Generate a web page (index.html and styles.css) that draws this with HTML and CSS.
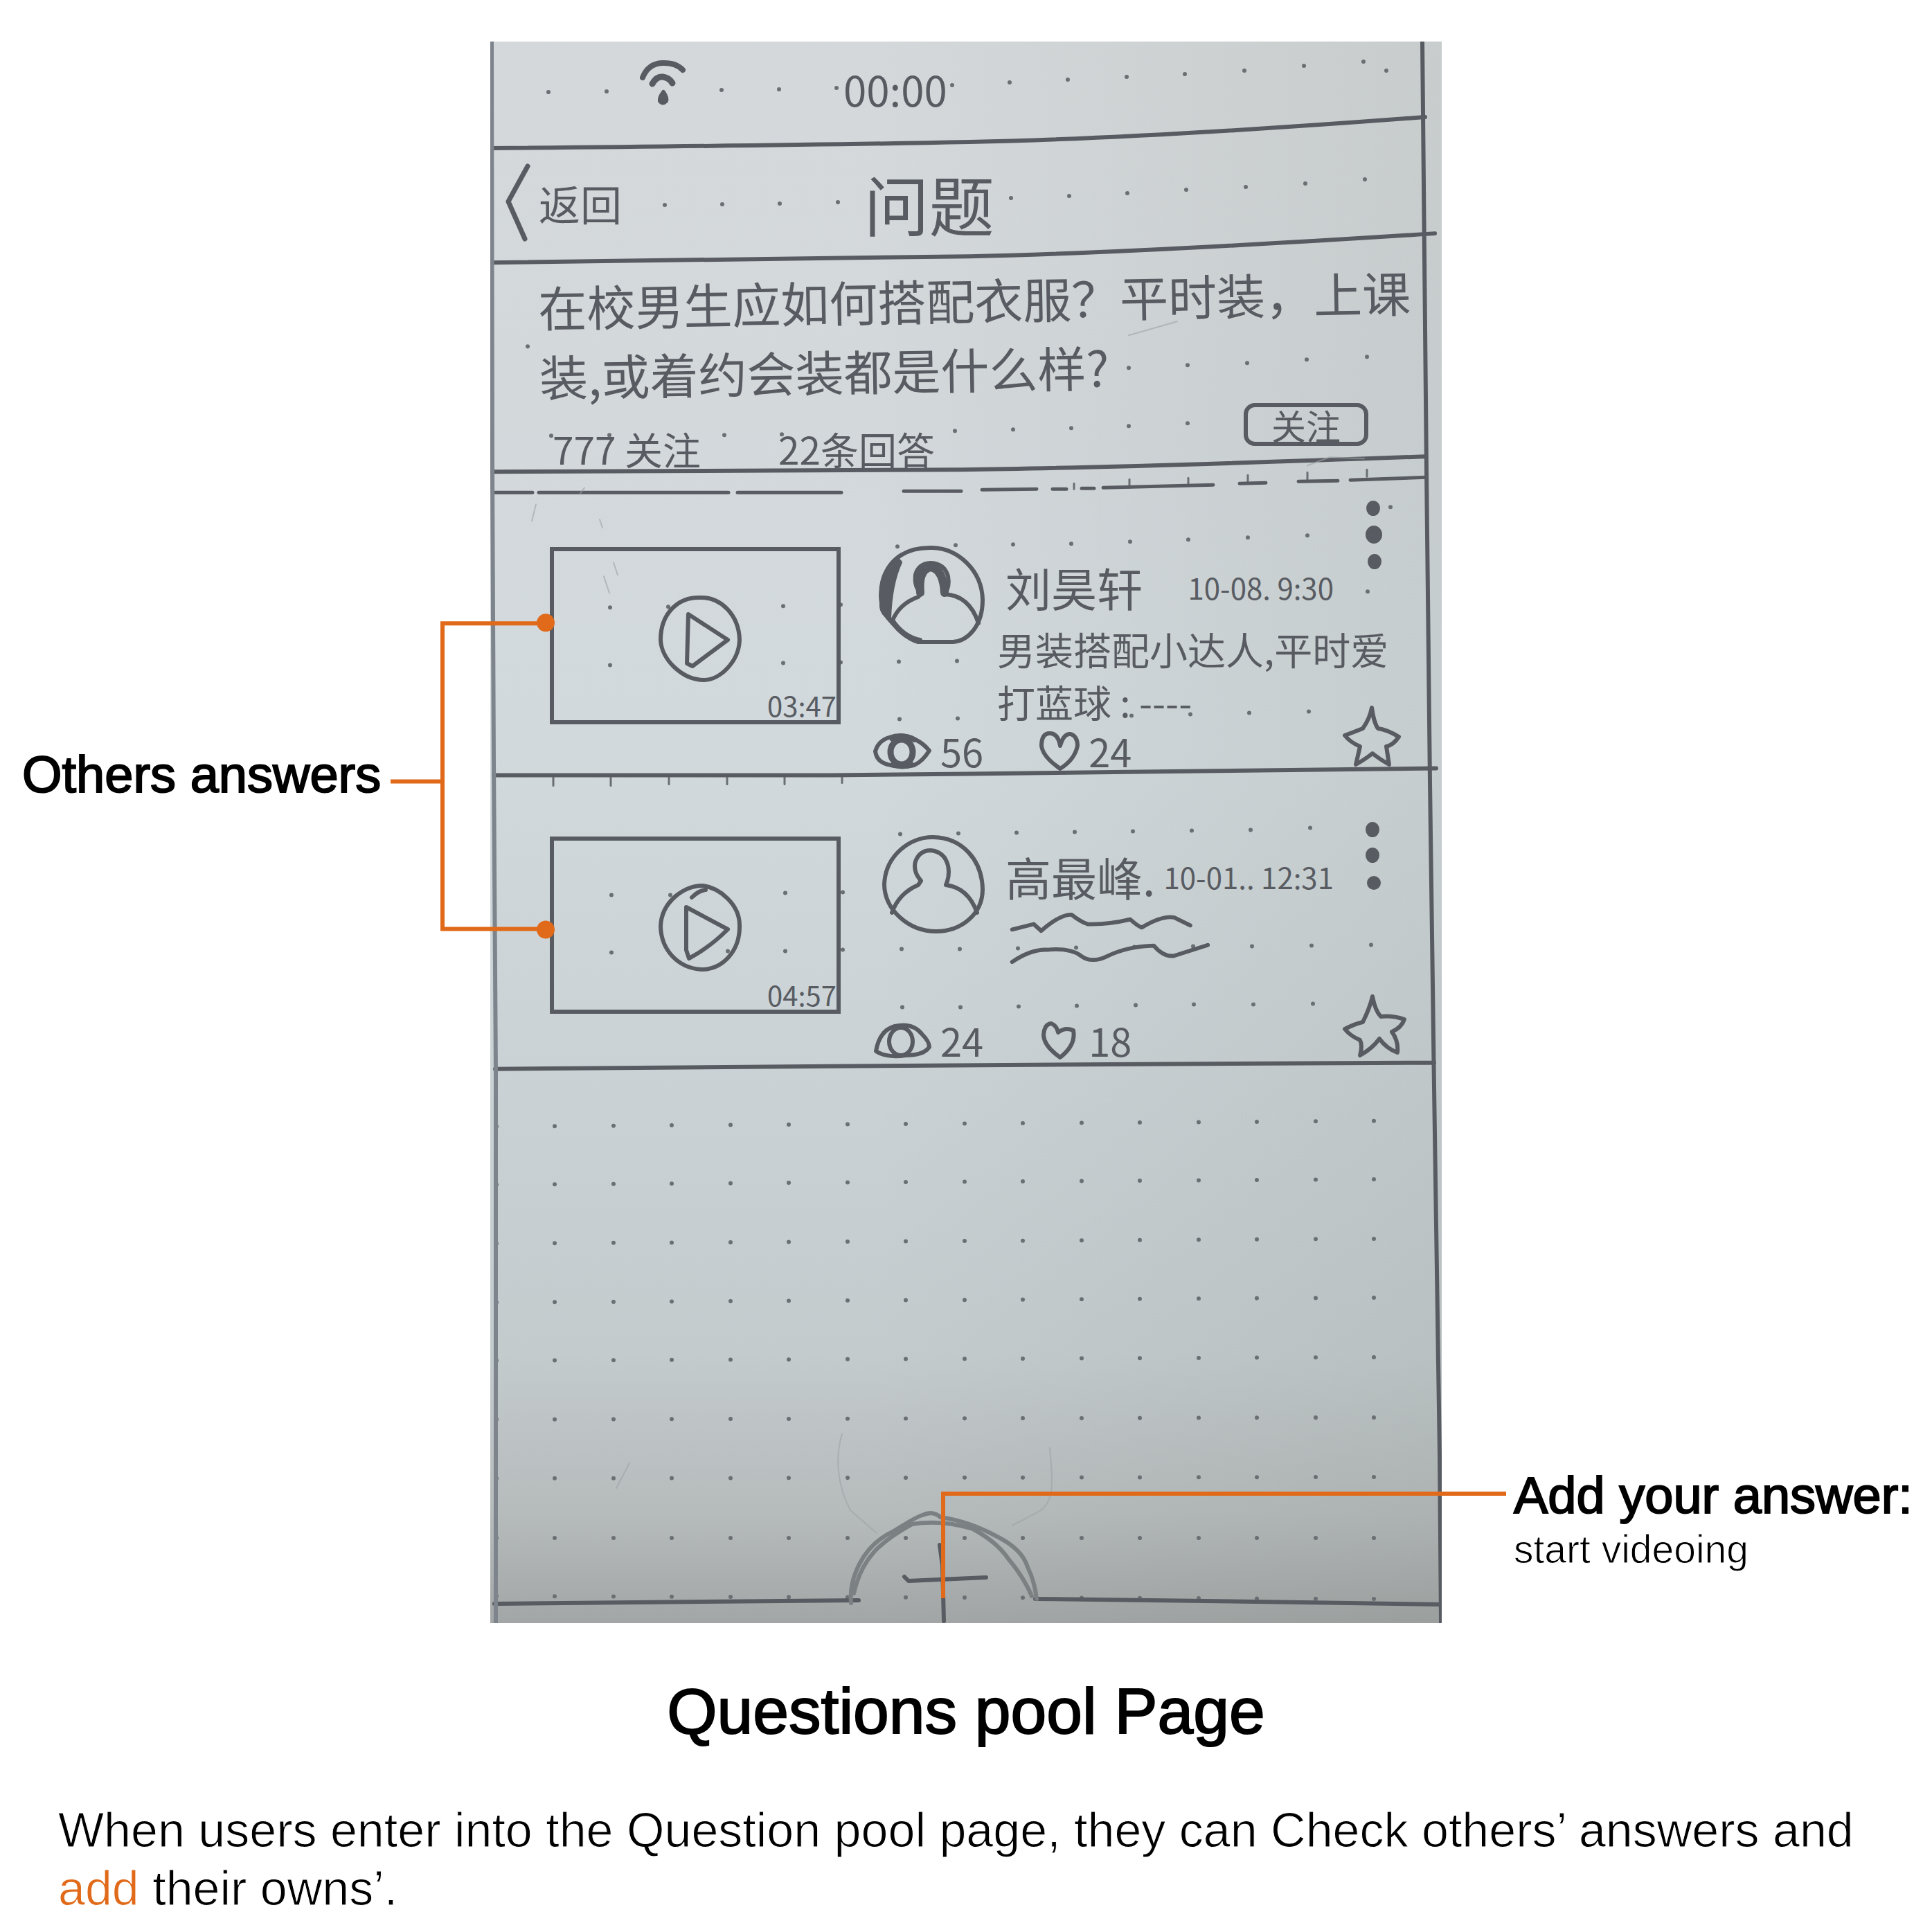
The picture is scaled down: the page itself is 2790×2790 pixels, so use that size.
FILE: index.html
```html
<!DOCTYPE html>
<html lang="en">
<head>
<meta charset="utf-8">
<title>Questions pool Page</title>
<link rel="stylesheet" href="styles.css">
</head>
<body>
<main class="page">
  <div class="board">
    <p class="note note-left">Others answers</p>

    <section class="sheet" lang="zh-Hans">
      <svg class="paper" viewBox="708 60 1374 2283" preserveAspectRatio="none" aria-hidden="true">
        <!-- printed dot grid -->
        <g class="dots">
          <path d="M710 133h0M792 133h0M876 132h0M1042 130h0M1125 129h0M1208 127h0M1375 123h0M1458 119h0M1542 115h0M1627 111h0M1711 107h0M1797 102h0M1883 95h0M1969 89h0M2002 102h0"/>
          <path d="M710 298h0M960 296h0M1043 295h0M1126 294h0M1210 292h0M1460 286h0M1544 283h0M1628 279h0M1713 274h0M1799 270h0M1885 265h0M1971 259h0"/>
          <path d="M762 500h0M1630 531h0M1715 527h0M1801 524h0M1887 519h0M1974 515h0M796 629h0M880 628h0M1046 628h0M1129 627h0M1379 622h0M1463 620h0M1547 618h0M1630 615h0M1715 611h0"/>
          <path d="M1296 789h0M1380 787h0M1463 786h0M1547 785h0M1632 782h0M1716 779h0M1802 776h0M1888 773h0M2008 732h0M881 877h0M965 876h0M1131 875h0M1214 873h0M1975 854h0M881 960h0M1131 957h0M1214 956h0M1298 955h0M1382 954h0M1299 1038h0M1383 1037h0M1634 1033h0M1719 1031h0M1804 1029h0M1890 1027h0"/>
          <path d="M1300 1204h0M1384 1203h0M1468 1202h0M1552 1201h0M1636 1200h0M1721 1199h0M1806 1198h0M1892 1195h0M883 1292h0M968 1292h0M1134 1289h0M1217 1288h0M883 1375h0M1051 1373h0M1134 1373h0M1217 1371h0M1302 1370h0M1386 1370h0M1470 1369h0M1554 1368h0M1638 1367h0M1723 1366h0M1808 1366h0M1894 1365h0M1980 1364h0M1303 1454h0M1387 1454h0M1471 1453h0M1555 1452h0M1640 1451h0M1724 1450h0M1810 1450h0M1896 1449h0"/>
          <path class="dot-row" d="M717 1626L2010 1618M717 1710L2010 1702M717 1795L2010 1788M717 1880L2010 1873M717 1964L2010 1959M717 2049L2010 2046M717 2134L2010 2132M717 2220L2010 2220M717 2304L2010 2308"/>
          <path class="ticks" d="M799 1122v12M882 1122v12M966 1122v10M1050 1122v10M1133 1122v10M1216 1122v8M1551 698v8M1631 692v12M1716 690v10M1802 686v10M1888 682v10M1974 678v10"/>
        </g>
        <!-- ruled lines -->
        <g class="rules">
          <path d="M708 214Q1150 210 1400 205T2058 169"/>
          <path d="M708 379Q1180 374 1400 370T2072 337"/>
          <path d="M708 681Q1200 680 1390 678T2058 659"/>
          <path d="M713 1119L1200 1119L1400 1117L1650 1114L2074 1109"/>
          <path d="M715 1543L1200 1539L1650 1536L2071 1534"/>
          <path d="M714 2315L1240 2310M1495 2308L1740 2311L2082 2316"/>
          <path class="thin" d="M715 711H769M778 711H1052M1065 711H1215M1305 709H1388M1418 707L1497 706M1520 706H1540M1562 705H1580M1593 704L1752 700M1790 698L1828 697M1875 695L1932 694M1950 693L2060 689"/>
          <path d="M2054 60L2060 680L2065 1130L2071 1570L2079 2100L2081 2343"/>
          <path class="edge" d="M710 60L711 680L713 1100L716 1550L716 2343"/>
        </g>
        <!-- smudges and faint pencil -->
        <g class="faint">
          <path d="M1630 484L1700 464M1888 672L1920 660L1970 662M768 752L774 728M838 712L844 704M866 750L870 762M886 812L892 830M872 832L880 856M1216 2070C1204 2110 1212 2150 1228 2180T1266 2213M1516 2090C1522 2150 1520 2170 1500 2182L1462 2202M909 2112L890 2148"/>
        </g>
      </svg>

      <header class="status">
        <svg class="wifi" viewBox="0 0 66 72" role="img" aria-label="Wi-Fi">
          <path d="M4 28Q12 8 32 7T62 17" stroke-width="8"/>
          <path d="M18 37Q24 26 33 27T47 36" stroke-width="9"/>
          <path class="solid" d="M34 49Q40 58 38 62Q33 67 29 62Q28 57 34 49Z"/>
        </svg>
        <span class="clock">00:00</span>
      </header>

      <nav class="nav">
        <button class="back" type="button">
          <svg viewBox="0 0 36 112" aria-hidden="true"><path d="M32 3L4 54L28 108" stroke-width="7"/></svg>
          返回
        </button>
        <h2 class="nav-title">问题</h2>
      </nav>

      <section class="question">
        <p class="question-text">在校男生应如何搭配衣服？平时装，上课<br>装,或着约会装都是什么样?</p>
        <div class="question-foot">
          <p class="counts"><span>777 关注</span><span>22条回答</span></p>
          <button class="follow" type="button">关注</button>
        </div>
      </section>

      <section class="answers">
        <article class="card">
          <button class="video" type="button" aria-label="Play 03:47">
            <svg class="play" viewBox="0 0 124 128" aria-hidden="true">
              <path d="M62 5C92 4 118 30 119 66C118 98 90 124 68 124C36 124 6 94 5 66C5 28 30 4 62 5Z"/>
              <path d="M45 29L102 66L51 104L43 100Z"/>
            </svg>
            <span class="length">03:47</span>
          </button>
          <div class="body">
            <div class="who">
              <svg class="avatar" viewBox="0 0 154 142" aria-hidden="true">
                <path d="M78 3C116 4 150 36 151 78C151 118 128 138 108 139H58C40 134 26 118 14 104C2 90 2 64 8 46C18 18 42 2 78 3Z"/>
                <path class="solid" d="M5 88Q4 50 30 22L32 24Q18 54 16 104Q6 98 5 88Z"/>
                <path d="M20 110Q30 84 58 74L62 68Q52 60 54 42Q58 26 76 25Q96 26 101 44Q104 60 96 70Q132 72 145 112"/>
                <path d="M61 68Q58 34 76 31Q94 34 96 68" stroke-width="12"/>
                <path d="M20 108Q36 132 60 137" stroke-width="8"/>
              </svg>
              <div class="who-text">
                <p class="name-row"><strong class="name">刘昊轩</strong><time>10-08. 9:30</time></p>
                <p class="bio">男装搭配小达人,平时爱<br>打蓝球 : ----</p>
              </div>
            </div>
            <p class="stats">
              <svg class="eye" viewBox="0 0 86 52" role="img" aria-label="Views">
                <path d="M4 27Q8 12 24 7Q44 0 62 10Q74 16 82 26Q72 42 60 47Q40 52 22 46Q6 42 4 27Z"/>
                <ellipse cx="42" cy="28" rx="16" ry="18" stroke-width="9"/>
                <path d="M28 8Q44 2 60 10M30 46Q44 51 56 46" stroke-width="8"/>
              </svg>
              <span>56</span>
              <svg class="heart" viewBox="0 0 60 58" role="img" aria-label="Likes">
                <path d="M31 55Q6 38 4 22Q4 4 16 4Q28 4 31 22Q36 4 46 5Q56 8 56 22Q52 42 31 55Z"/>
              </svg>
              <span>24</span>
            </p>
          </div>
          <div class="side">
            <button class="more" type="button" aria-label="More">
              <svg viewBox="0 0 28 102" aria-hidden="true"><ellipse class="solid" cx="13" cy="12" rx="7" ry="8"/><ellipse class="solid" cx="14" cy="50" rx="9" ry="10"/><ellipse class="solid" cx="15" cy="89" rx="7" ry="8"/></svg>
            </button>
            <button class="star" type="button" aria-label="Favourite">
              <svg viewBox="0 0 96 92" aria-hidden="true"><path d="M45 4Q48 26 54 34Q68 36 84 46Q76 58 66 60L70 86Q56 78 46 70Q36 78 22 86L28 60Q14 54 6 44Q22 38 32 34Q42 20 45 4Z"/></svg>
            </button>
          </div>
        </article>

        <article class="card">
          <button class="video" type="button" aria-label="Play 04:57">
            <svg class="play" viewBox="0 0 124 128" aria-hidden="true">
              <path d="M66 3C90 6 119 30 119 60C120 98 94 124 64 124C30 122 6 96 5 62C6 26 40 2 66 3ZM50 20Q60 10 70 9"/>
              <path d="M42 34L102 66Q76 92 46 108L42 96Z"/>
            </svg>
            <span class="length">04:57</span>
          </button>
          <div class="body">
            <div class="who">
              <svg class="avatar" viewBox="0 0 154 142" aria-hidden="true">
                <path d="M80 3C122 4 150 36 151 78C151 116 118 139 84 139C44 139 10 108 9 72C10 30 46 2 80 3Z"/>
                <path d="M20 112Q30 84 58 72L62 66Q50 52 54 38Q60 22 76 22Q96 24 101 44Q104 58 98 72Q130 76 143 112"/>
              </svg>
              <div class="who-text">
                <p class="name-row"><strong class="name">高最峰.</strong><time>10-01.. 12:31</time></p>
                <svg class="scribble" viewBox="1440 1322 320 156" role="img" aria-label="Bio text">
                  <path d="M1458 1349L1490 1341L1501 1351Q1530 1326 1546 1327Q1560 1338 1570 1341Q1600 1342 1633 1334Q1644 1344 1650 1346Q1680 1328 1698 1331L1722 1343"/>
                  <path d="M1458 1397Q1486 1378 1510 1379Q1544 1376 1560 1388T1600 1388Q1630 1374 1668 1373Q1682 1390 1698 1388L1748 1372"/>
                </svg>
              </div>
            </div>
            <p class="stats">
              <svg class="eye" viewBox="0 0 86 52" role="img" aria-label="Views">
                <path d="M5 42Q10 12 32 6Q58 0 72 18Q82 28 82 36Q74 48 48 48Q20 52 5 42Z"/>
                <ellipse cx="41" cy="28" rx="17" ry="20"/>
              </svg>
              <span>24</span>
              <svg class="heart" viewBox="0 0 60 58" role="img" aria-label="Likes">
                <path d="M31 54Q8 38 7 22Q8 6 18 5Q26 8 28 18Q38 10 50 15Q54 36 31 54Z"/>
              </svg>
              <span>18</span>
            </p>
          </div>
          <div class="side side-low">
            <button class="more" type="button" aria-label="More">
              <svg viewBox="0 0 28 102" aria-hidden="true"><ellipse class="solid" cx="12" cy="12" rx="7" ry="8"/><ellipse class="solid" cx="12" cy="49" rx="7" ry="8"/><ellipse class="solid" cx="14" cy="89" rx="7" ry="7"/></svg>
            </button>
            <button class="star" type="button" aria-label="Favourite">
              <svg viewBox="0 0 96 92" aria-hidden="true"><path d="M46 3Q50 24 58 32Q74 30 92 36Q88 48 74 54Q84 68 82 84Q66 78 56 64Q46 78 28 88Q32 74 28 66Q14 60 6 50Q22 42 32 40Q42 20 46 3Z"/></svg>
            </button>
          </div>
        </article>
      </section>

      <footer class="tabs">
        <button class="add" type="button" aria-label="Add your answer">
          <svg viewBox="1226 2179 274 164" aria-hidden="true">
            <path class="pencil" d="M1229 2314C1226 2280 1244 2232 1289 2211Q1322 2190 1332 2187Q1347 2180 1358 2190Q1400 2196 1440 2218Q1476 2236 1484 2262Q1494 2282 1497 2308"/>
            <path class="pencil" d="M1233 2300C1244 2250 1270 2226 1317 2200Q1360 2193 1405 2207Q1440 2226 1456 2250Q1478 2276 1490 2304"/>
            <path d="M1306 2276L1312 2282L1424 2277M1357 2230L1361 2260L1363 2340"/>
          </svg>
        </button>
      </footer>
    </section>

    <div class="note-right">
      <p class="note">Add your answer:</p>
      <p class="note-sub">start videoing</p>
    </div>

    <svg class="callouts" viewBox="0 60 2790 2283" preserveAspectRatio="none" aria-hidden="true">
      <path d="M564 1128H639M787 900H639V1341H787M1362 2307V2156H2175"/>
      <circle cx="788" cy="899" r="13"/>
      <circle cx="788" cy="1342" r="13"/>
    </svg>
  </div>

  <h1 class="title">Questions pool Page</h1>
  <p class="summary">When users enter into the Question pool page, they can Check others’ answers and <span class="accent">add</span> their owns’.</p>
</main>
</body>
</html>
```
FILE: styles.css
```css
:root {
  --ink: #585c62;
  --accent: #e06a1a;
  --hand: "Noto Sans CJK SC", "Noto Sans", sans-serif;
  --label: "Liberation Sans", Arial, sans-serif;
}

* { box-sizing: border-box; }

body {
  margin: 0;
  background: #fff;
  color: #000;
  font-family: var(--label);
}

p, h1, h2 { margin: 0; font-weight: 400; }

button {
  display: block;
  margin: 0;
  padding: 0;
  border: 0;
  background: none;
  color: inherit;
  font: inherit;
}

.page { padding-top: 60px; }

.board {
  position: relative;
  display: grid;
  grid-template-columns: minmax(0, 708fr) minmax(0, 1374fr) minmax(0, 708fr);
}

/* annotation labels: medium weight by outline, light weight by a paper-coloured outline */
.note {
  font-size: 74px;
  line-height: 84px;
  white-space: nowrap;
  -webkit-text-stroke: 2px #000;
}

.note-left { padding: 1017px 0 0 32px; }

.note-right { padding: 2058px 0 0 104px; }

.note-sub {
  font-size: 57px;
  line-height: 70px;
  -webkit-text-stroke: 1px #fff;
}

.callouts {
  position: absolute;
  inset: 0;
  width: 100%;
  height: 100%;
  pointer-events: none;
}

.callouts path { fill: none; stroke: var(--accent); stroke-width: 6; }
.callouts circle { fill: var(--accent); }

/* paper sheet */
.sheet {
  position: relative;
  color: var(--ink);
  font-family: var(--hand);
  background:
    linear-gradient(90deg, transparent 40%, rgba(90, 100, 90, 0.1)),
    linear-gradient(#d4d8da 0%, #d2d9dc 45%, #cbd2d5 65%, #c4cbcd 83%, #b6bbbc 93%, #a2a6a6 100%);
}

.sheet svg {
  display: block;
  flex: none;
  fill: none;
  stroke: var(--ink);
  stroke-width: 6;
  stroke-linecap: round;
  stroke-linejoin: round;
  overflow: visible;
}

.sheet .solid { fill: var(--ink); }

.sheet .paper {
  position: absolute;
  inset: 0;
  width: 100%;
  height: 100%;
  overflow: hidden;
}

.dots { stroke: #6a6f73; stroke-width: 6; }
.dots .dot-row { stroke-dasharray: 0 84 0 85; }
.dots .ticks { stroke-width: 3; }
.rules { stroke-width: 6; }
.rules .thin { stroke-width: 5; }
.rules .edge { stroke: #7d848c; }
.faint { stroke: #9da3a6; stroke-width: 2; opacity: 0.6; }
.sheet .pencil { stroke: #7b8083; }

.status, .nav, .question, .answers, .tabs { position: relative; }

.status {
  display: flex;
  gap: 228px;
  padding: 24px 0 0 216px;
  height: 150px;
}

.wifi { width: 66px; height: 72px; }

.clock { font-size: 60px; line-height: 88px; }

.nav {
  display: grid;
  grid-template-columns: 39% 1fr;
  align-items: center;
  height: 165px;
}

.back {
  display: flex;
  align-items: center;
  gap: 12px;
  padding-left: 22px;
  font-size: 60px;
}

.back svg { width: 36px; height: 112px; }

.nav-title { padding-left: 4px; font-size: 94px; line-height: 120px; }

.question { padding: 7px 106px 0 70px; }

.question-text {
  font-size: 70px;
  line-height: 100px;
  white-space: nowrap;
  transform: rotate(-1deg);
}

.question-foot {
  display: flex;
  justify-content: space-between;
  align-items: flex-start;
}

.counts {
  display: flex;
  gap: 112px;
  padding: 32px 0 0 20px;
  font-size: 55px;
  line-height: 66px;
}

.follow {
  width: 180px;
  height: 62px;
  border: 6px solid var(--ink);
  border-radius: 16px;
  font-size: 50px;
  line-height: 50px;
}

/* answers */
.answers { padding-top: 22px; }

.card {
  display: flex;
  height: 418px;
  padding: 0 50px 0 86px;
}

.video {
  display: grid;
  width: 420px;
  height: 256px;
  margin-top: 88px;
  border: 6px solid var(--ink);
}

.video > * { grid-area: 1 / 1; }

.play { width: 124px; height: 128px; margin: 8px 0 0 14px; place-self: center; }

.length {
  align-self: end;
  justify-self: end;
  font-size: 40px;
  line-height: 44px;
}

.body { flex: 1; min-width: 0; padding: 86px 0 0 46px; }

.who { display: flex; gap: 18px; padding-left: 8px; }

.avatar { width: 154px; height: 142px; }

.who-text { padding-top: 8px; white-space: nowrap; }

.name-row {
  display: flex;
  align-items: center;
  justify-content: space-between;
  width: 486px;
  height: 102px;
  padding-left: 12px;
}

.name { font-size: 66px; font-weight: 400; line-height: 102px; }

time { font-size: 42px; }

.bio { font-size: 55px; line-height: 76px; }

.scribble { width: 320px; height: 152px; }

.stats {
  display: flex;
  align-items: center;
  font-size: 56px;
  line-height: 68px;
}

.eye { width: 86px; height: 52px; }
.heart { width: 60px; height: 58px; margin-left: 80px; }
.stats span { padding-left: 12px; }

.side {
  display: flex;
  flex-direction: column;
  justify-content: space-between;
  align-items: center;
  width: 96px;
  padding: 20px 0 10px;
}

.side-low { padding-top: 66px; }

.more svg { width: 28px; height: 102px; }
.star svg { width: 96px; height: 92px; }

.tabs { padding: 642px 0 0 518px; }
.add svg { width: 274px; height: 164px; }

/* caption */
.title {
  padding-top: 73px;
  font-size: 93px;
  line-height: 108px;
  text-align: center;
  -webkit-text-stroke: 2px #000;
}

.summary {
  padding: 76px 84px 0;
  font-size: 70px;
  line-height: 84px;
  -webkit-text-stroke: 1px #fff;
}

.accent { color: var(--accent); }
```
